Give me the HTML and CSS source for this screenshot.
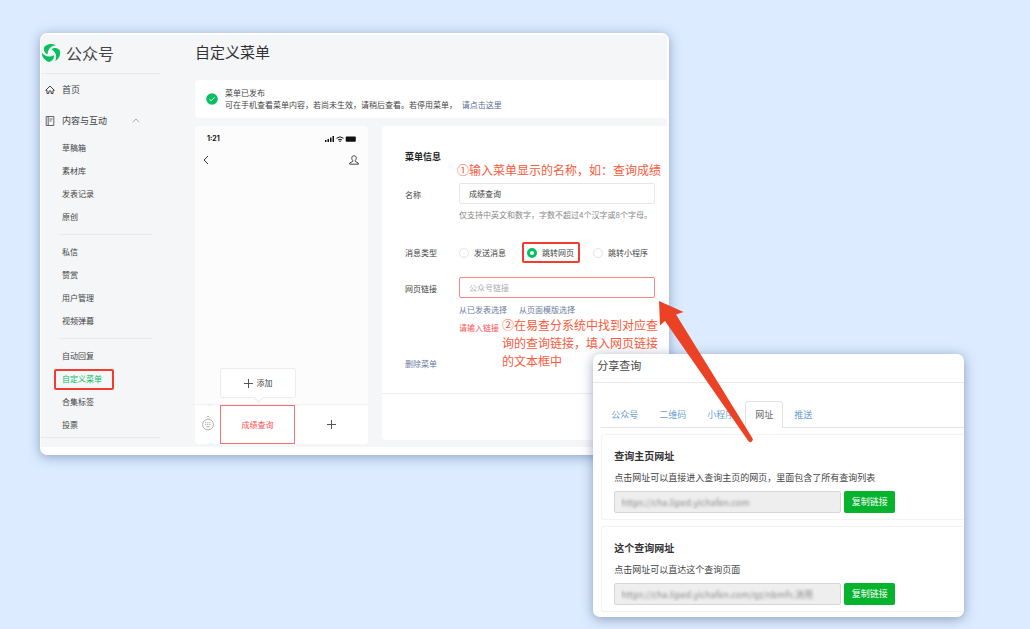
FILE: index.html
```
<!DOCTYPE html>
<html lang="zh-CN">
<head>
<meta charset="utf-8">
<title>自定义菜单</title>
<link rel="stylesheet" href="styles.css">
</head>
<body>
<div class="stage">
  <div class="window">
    <aside class="sidebar">
      <div class="brand">
        <svg class="logo" viewBox="0 0 20 20" fill="#07c160">
          <path id="blade" d="M3.200 4A9.200 9.200 0 0 1 15 2.300C10.500 2.800 6.800 5.500 6.600 11.200C3.500 10.300 2.300 7 3.200 4Z"/>
          <use href="#blade" transform="rotate(120 10 10)"/>
          <use href="#blade" transform="rotate(240 10 10)"/>
        </svg>
        <span>公众号</span>
      </div>
      <nav class="nav">
        <a class="nav-main" href="#">
          <svg class="nav-icon" viewBox="0 0 10 10" fill="none" stroke="#444" stroke-width="1"><path d="M.7 5.300 5 1l4.300 4.300H8V8.500H6.200V7a1.200 1.200 0 0 0-2.400 0v1.500H2V5.300z"/></svg>
          <span>首页</span>
        </a>
        <a class="nav-main" href="#">
          <svg class="nav-icon" viewBox="0 0 10 10" fill="none" stroke="#555" stroke-width=".9"><path d="M1.200.5h7.600v9H1.200zM3.200.5v9M4.500 3h3M4.500 5h2"/></svg>
          <span>内容与互动</span>
          <svg class="caret" viewBox="0 0 8 5" fill="none" stroke="#aaa"><path d="M.8 4.300 4 1l3.200 3.300"/></svg>
        </a>
        <ul class="nav-group">
          <li><a href="#">草稿箱</a></li>
          <li><a href="#">素材库</a></li>
          <li><a href="#">发表记录</a></li>
          <li><a href="#">原创</a></li>
        </ul>
        <ul class="nav-group">
          <li><a href="#">私信</a></li>
          <li><a href="#">赞赏</a></li>
          <li><a href="#">用户管理</a></li>
          <li><a href="#">视频弹幕</a></li>
        </ul>
        <ul class="nav-group">
          <li><a href="#">自动回复</a></li>
          <li class="current"><a href="#">自定义菜单</a></li>
          <li><a href="#">合集标签</a></li>
          <li><a href="#">投票</a></li>
        </ul>
      </nav>
    </aside>
    <main class="main">
      <h1 class="title">自定义菜单</h1>
      <div class="notice">
        <svg class="tick" viewBox="0 0 12 12"><circle cx="6" cy="6" r="5.800" fill="#07c160"/><path d="m3.500 6.200 1.700 1.600 3.300-3.500" fill="none" stroke="#fff"/></svg>
        <div>
          <p>菜单已发布</p>
          <p>可在手机查看菜单内容，若尚未生效，请稍后查看。若停用菜单， <a href="#">请点击这里</a></p>
        </div>
      </div>
      <div class="columns">
        <section class="phone">
          <div class="status">
            <span>1:21</span>
            <svg class="signals" viewBox="0 0 32 8" fill="#111"><path d="M0 5h1.500v2H0zM2.500 4H4v3H2.500zM5 2.500h1.500V7H5zM7.500 1H9v6H7.500zM21.500 1.500h8.500a.8.8 0 0 1 .8.8v3.600a.8.8 0 0 1-.8.8h-8.500a.8.8 0 0 1-.8-.8V2.300a.8.8 0 0 1 .8-.8z"/><path d="M11.500 3.300q3.500-3 7 0M13 5q2-1.600 4 0" fill="none" stroke="#111"/><circle cx="15" cy="6.300" r=".8"/></svg>
          </div>
          <div class="phone-head">
            <svg class="back" viewBox="0 0 6 10" fill="none" stroke="#333"><path d="M5 1 1 5l4 4"/></svg>
            <svg class="person" viewBox="0 0 10 10" fill="none" stroke="#333" stroke-width=".9"><path d="M3.800 5.600C2.200 4 2.300.8 5 .8s2.800 3.200 1.200 4.800v.8L9.300 8v1.200H.7V8l3.100-1.600z"/></svg>
          </div>
          <button class="add" type="button"><svg class="plus" viewBox="0 0 9 9" stroke="#555"><path d="M4.500 0v9M0 4.500h9"/></svg>添加</button>
          <div class="phone-bar">
            <svg class="keyboard" viewBox="0 0 12 16" fill="none" stroke="#999" stroke-width=".8"><circle cx="6" cy="9.500" r="5.400"/><path d="M5 2.200 6 1.200l1 1"/><path d="M3 7.800h6M3 9.600h6" stroke-dasharray="1.300 .8"/><path d="M4.300 11.800h3.400"/></svg>
            <button class="menu-item" type="button">成绩查询</button>
            <button class="menu-new" type="button" aria-label="添加菜单"><svg class="plus" viewBox="0 0 9 9" stroke="#555"><path d="M4.500 0v9M0 4.500h9"/></svg></button>
          </div>
        </section>
        <form class="form">
          <h2>菜单信息</h2>
          <div class="note note-one">①输入菜单显示的名称，如：查询成绩</div>
          <div class="row row-name">
            <label for="name">名称</label>
            <div class="field">
              <input id="name" type="text" value="成绩查询">
              <p class="hint">仅支持中英文和数字，字数不超过4个汉字或8个字母。</p>
            </div>
          </div>
          <div class="row row-type">
            <span class="label">消息类型</span>
            <div class="radios">
              <label><input type="radio" name="type">发送消息</label>
              <label class="marked"><input type="radio" name="type" checked>跳转网页</label>
              <label><input type="radio" name="type">跳转小程序</label>
            </div>
          </div>
          <div class="row row-link">
            <label for="link">网页链接</label>
            <div class="field">
              <input id="link" class="invalid" type="text" placeholder="公众号链接">
              <p class="picks"><a href="#">从已发表选择</a><a href="#">从页面模版选择</a></p>
              <p class="error">请输入链接</p>
            </div>
          </div>
          <div class="note note-two"><span>②在易查分系统中找到对应查</span><span>询的查询链接，填入网页链接</span><span>的文本框中</span></div>
          <a class="remove" href="#">删除菜单</a>
          <div class="form-foot"></div>
        </form>
      </div>
    </main>
  </div>

  <section class="share">
    <h2 class="share-title">分享查询</h2>
    <div class="share-body">
      <div class="tabs">
        <a href="#">公众号</a>
        <a href="#">二维码</a>
        <a href="#">小程序</a>
        <a class="active" href="#">网址</a>
        <a href="#">推送</a>
      </div>
      <div class="card">
        <h3>查询主页网址</h3>
        <label for="home-url">点击网址可以直接进入查询主页的网页，里面包含了所有查询列表</label>
        <div class="copy">
          <input id="home-url" type="text" readonly value="https://cha.liped.yichafen.com">
          <button type="button">复制链接</button>
        </div>
      </div>
      <div class="card">
        <h3>这个查询网址</h3>
        <label for="query-url">点击网址可以直达这个查询页面</label>
        <div class="copy">
          <input id="query-url" type="text" readonly value="https://cha.liped.yichafen.com/qz/nbmfs.消用">
          <button type="button">复制链接</button>
        </div>
      </div>
    </div>
  </section>

  <svg class="arrow" viewBox="0 0 100 148" fill="#eb4226"><path d="M4 4 28.500 15 21 17.500 97.300 141A2.500 2.500 0 0 1 93.300 144L10 24 5 28.500Z"/></svg>
</div>
</body>
</html>
```
FILE: styles.css
```
* { box-sizing: border-box; }
body {
  margin: 0;
  min-height: 100vh;
  background: #dcebff;
  color: #444;
  font: 8px/12px "Noto Sans CJK SC", sans-serif;
}
h1, h2, h3, p, ul { margin: 0; padding: 0; font-weight: 400; }
ul { list-style: none; }
a { color: inherit; text-decoration: none; }
svg { display: block; flex: none; }
input, button { font: inherit; color: inherit; margin: 0; }
button { padding: 0; }

.stage { position: relative; padding: 33px 361px 0 40px; }

/* Account console window */
.window {
  display: flex;
  padding: 2px 2px 8px 1px;
  border-radius: 7px;
  background: #fff;
  box-shadow: 0 2px 12px rgba(60, 90, 140, .5);
}
.sidebar { flex: none; width: 154px; background: #f5f6f8; border-radius: 6px 0 0 0; }
.brand {
  display: flex;
  align-items: center;
  gap: 5px;
  width: 119px;
  height: 39px;
  padding-bottom: 2px;
  border-bottom: 1px solid #e9eaec;
  font-size: 16px;
}
.logo { width: 20px; height: 20px; }
.nav { width: 119px; border-bottom: 1px solid #e9eaec; }
.nav-main {
  display: flex;
  align-items: center;
  height: 31px;
  padding-left: 4px;
  font-size: 9px;
}
.nav-icon { width: 10px; height: 10px; margin-right: 7px; }
.caret { width: 8px; height: 5px; margin-left: 25px; }
.nav-group { margin: 1px 8px 0 18px; }
.nav-group + .nav-group { border-top: 1px solid #e9eaec; padding-top: 6px; margin-top: 5px; }
.nav-group li { height: 23px; padding: 5px 0 0 3px; }
.nav-group .current {
  width: 60px;
  height: 21px;
  margin: 1px 0 1px -5px;
  padding: 2px 0 0 6px;
  border: 2px solid #f33b30;
  border-radius: 2px;
  color: #07c160;
}

.main { flex: 1; min-width: 0; background: #f5f6f8; padding-bottom: 3px; }
.title { height: 45px; padding-top: 6px; font-size: 15px; line-height: 22px; color: #333; }
.notice {
  display: flex;
  align-items: center;
  gap: 7px;
  height: 38px;
  padding-left: 11px;
  border-radius: 4px 0 0 4px;
  background: #fff;
}
.notice a { color: #576b95; margin-left: 3px; }
.tick { width: 12px; height: 12px; }
.columns { display: flex; gap: 14px; margin-top: 8px; }

/* Phone preview */
.phone {
  display: flex;
  flex-direction: column;
  width: 173px;
  height: 318px;
  border-radius: 4px;
  background: #fcfcfc;
}
.status {
  display: flex;
  justify-content: space-between;
  align-items: center;
  padding: 7px 11px 0 12px;
  color: #111;
  font: bold 7px/12px Inter, sans-serif;
}
.signals { width: 32px; height: 8px; }
.phone-head { display: flex; justify-content: space-between; align-items: center; padding: 10px 9px 0 8px; }
.back { width: 6px; height: 10px; }
.person { width: 10px; height: 10px; }
.add {
  position: relative;
  display: flex;
  justify-content: center;
  align-items: center;
  gap: 4px;
  width: 76px;
  height: 30px;
  margin: auto 0 7px 25px;
  border: 1px solid #ececec;
  border-radius: 2px;
  background: #fff;
}
.add::after {
  content: "";
  position: absolute;
  left: 34px;
  bottom: -4px;
  width: 6px;
  height: 6px;
  border: solid #ececec;
  border-width: 0 1px 1px 0;
  background: #fff;
  transform: rotate(45deg);
}
.plus { width: 9px; height: 9px; }
.phone-bar {
  display: flex;
  align-items: center;
  height: 39px;
  padding-left: 7px;
  border-radius: 0 0 4px 4px;
  background: #fff;
  box-shadow: 0 -1px #f3f3f3;
}
.keyboard { width: 12px; height: 16px; margin: 0 6px 3px 0; }
.menu-item { width: 75px; height: 39px; border: 1px solid #fa7070; background: #fff; color: #fa5151; }
.menu-new { display: flex; justify-content: center; flex: 1; border: 0; background: none; }

/* Menu form */
.form {
  position: relative;
  flex: 1;
  min-width: 0;
  height: 314px;
  padding: 24px 0 0 23px;
  border-radius: 4px 0 0 4px;
  background: #fff;
}
.form h2 { font-size: 9px; font-weight: 700; line-height: 14px; color: #222; }
.row { display: flex; }
.row > label, .row > .label { width: 54px; flex: none; }
.row-name { margin-top: 19px; }
.row-name > label { padding-top: 6px; }
.row-type { margin-top: 20px; align-items: center; }
.row-link { margin-top: 14px; }
.row-link > label { padding-top: 6px; }
.field { width: 196px; }
.field input {
  display: block;
  width: 100%;
  height: 21px;
  padding: 0 9px 1px;
  border: 1px solid #e6e6e6;
  border-radius: 2px;
  background: #fff;
  outline: 0;
}
.field input.invalid { border-color: #fa8585; }
.field input::placeholder { color: #aaa; opacity: 1; }
.hint { margin-top: 5px; padding-bottom: 1px; white-space: nowrap; color: #888; }
.radios { display: flex; align-items: center; gap: 11px; white-space: nowrap; }
.radios label { display: flex; align-items: center; gap: 5px; }
.radios input {
  appearance: none;
  width: 10px;
  height: 10px;
  border: 1px solid #e3e3e3;
  border-radius: 50%;
  background: #fff;
}
.radios input:checked { border: 3px solid #07c160; }
.radios .marked {
  height: 21px;
  margin: 0 -6px 0 3px;
  padding: 0 4px 0 3px;
  border: 2px solid #f33b30;
  border-radius: 2px;
}
.radios label:first-child { margin-right: 2px; }
.radios label:last-child { margin-left: 8px; }
.picks { display: flex; gap: 12px; margin-top: 6px; color: #6b7ba0; white-space: nowrap; }
.error { margin-top: 6px; color: #fa5151; }
.remove { display: inline-block; margin-top: 24px; color: #6b7ba0; }
.form-foot {
  position: absolute;
  left: 0;
  right: 0;
  bottom: 0;
  height: 47px;
  border-top: 1px solid #eee;
}
.note { position: absolute; font-size: 12px; line-height: 18px; color: #fa5a3c; white-space: nowrap; }
.note-one { left: 75px; top: 35px; }
.note-two { left: 120px; top: 190px; }
.note span { display: block; }

/* Share window */
.share {
  position: absolute;
  top: 354px;
  right: 66px;
  width: 36%;
  padding-bottom: 5px;
  overflow: hidden;
  border-radius: 7px;
  background: #fff;
  box-shadow: 0 2px 12px rgba(60, 80, 120, .5);
}
.share-title {
  height: 29px;
  padding: 3px 0 0 4px;
  border-bottom: 1px solid #e8e8e8;
  font-size: 11px;
  line-height: 16px;
}
.share-body { padding-left: 8px; font-size: 9px; }
.tabs {
  display: flex;
  gap: 1px;
  height: 45px;
  align-items: flex-end;
  border-bottom: 1px solid #e4e4e4;
  color: #6f9fd3;
}
.tabs a { height: 26px; padding: 7px 9px 0; border: 1px solid transparent; border-bottom: 0; }
.tabs .active {
  height: 27px;
  margin-bottom: -1px;
  border-color: #e2e2e2;
  border-radius: 3px 3px 0 0;
  background: #fff;
  color: #666;
}
.card {
  height: 86px;
  margin-top: 6px;
  padding: 13px 0 0 12px;
  border: 1px solid #f3f3f3;
  border-right: 0;
  border-radius: 3px 0 0 3px;
}
.card h3 { font-size: 10px; font-weight: 700; line-height: 16px; color: #333; }
.card label { display: block; margin-top: 8px; white-space: nowrap; }
.copy { display: flex; gap: 3px; margin-top: 7px; }
.copy input {
  width: 227px;
  height: 22px;
  padding: 0 6px;
  border: 1px solid #d6d6d6;
  border-radius: 2px;
  background: #eee;
  color: transparent;
  text-shadow: 0 0 3px #888;
  outline: 0;
}
.copy button { width: 51px; height: 22px; border: 0; border-radius: 2px; background: #05b42c; color: #fff; }

.arrow { position: absolute; top: 297px; right: 275px; width: 100px; height: 148px; }
```
